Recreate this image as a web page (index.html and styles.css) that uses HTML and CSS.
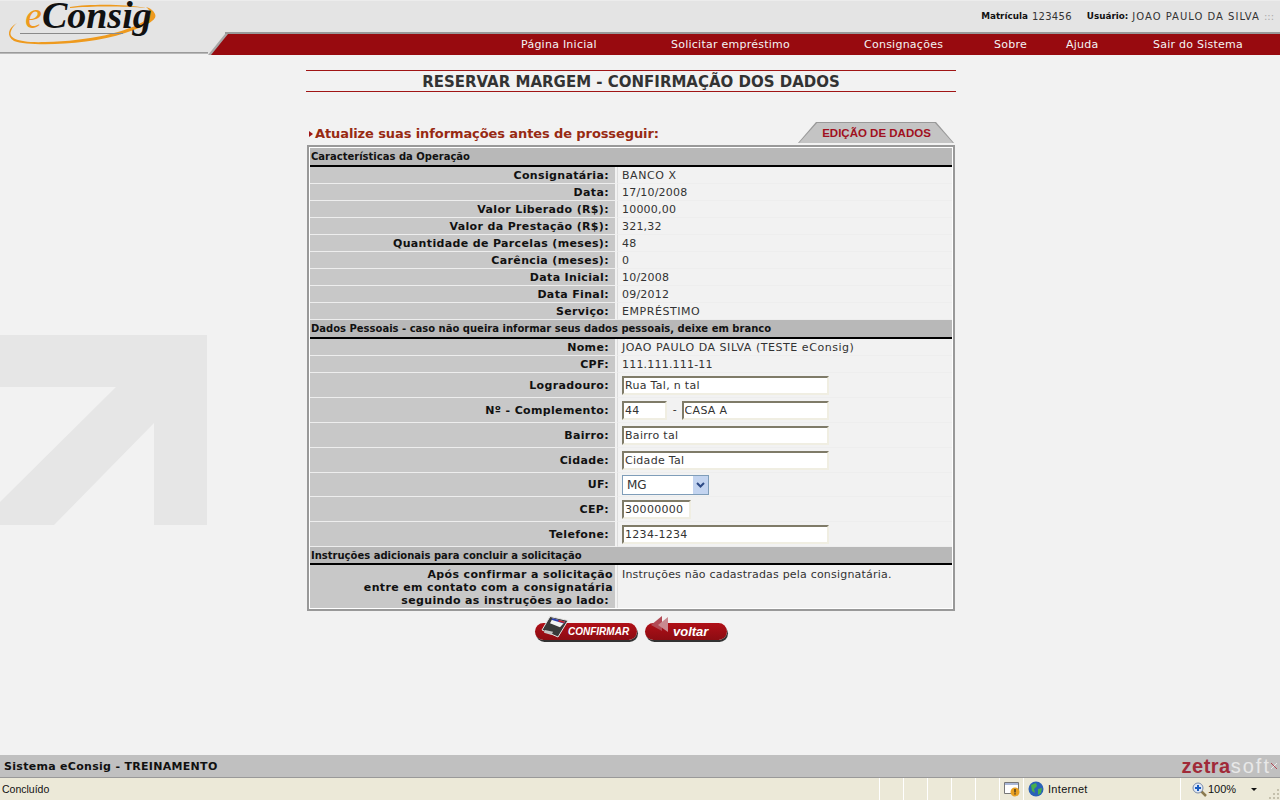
FILE: index.html
```html
<!DOCTYPE html>
<html lang="pt-BR">
<head>
    <meta charset="UTF-8">
    <title>eConsig - Reservar Margem</title>
    <link rel="stylesheet" href="styles.css">
</head>
<body>
    <svg class="watermark" width="207" height="190" viewBox="0 0 207 190">
        <path fill="#e6e6e6" d="M0 0H207V190H154V88L54 190H0V167L116 52H0Z"/>
    </svg>

    <header class="top">
        <div class="top-bar">
            <div class="logo">
                <svg class="logo-swoosh" width="165" height="50" viewBox="0 0 165 50">
                    <path fill="#ee9a1e" d="M17 23C8 28 6 36 14 41C30 47 90 45 125 33C146 26 158 20 155 14C154 11 150 8 146 7C151 11 152 15 146 20C128 32 90 41 45 42C18 43 8 38 11 31C12 28 14 25 17 23Z"/>
                    <path fill="#ee9a1e" d="M70 7C90 4 125 4 146 8C125 6 90 6 70 8Z"/>
                    <path fill="#8a8a8a" d="M20 33H123V34H20Z"/>
                </svg>
                <span class="logo-text"><span class="logo-e">e</span>Consig</span>
            </div>
            <div class="user-info">
                <b>Matrícula</b>
                <span class="user-num">123456</span>
                <b class="user-label">Usuário:</b>
                <span class="user-name">JOAO PAULO DA SILVA</span>
                <span class="dots">:::</span>
            </div>
        </div>
        <nav class="menu">
            <a href="#">Página Inicial</a>
            <a href="#">Solicitar empréstimo</a>
            <a href="#">Consignações</a>
            <a href="#">Sobre</a>
            <a href="#">Ajuda</a>
            <a href="#">Sair do Sistema</a>
        </nav>
    </header>

    <main class="content">
        <h1 class="page-title">RESERVAR MARGEM - CONFIRMAÇÃO DOS DADOS</h1>

        <div class="form-head">
            <h2 class="form-title"><span class="bullet"></span>Atualize suas informações antes de prosseguir:</h2>
            <div class="tab"><span>EDIÇÃO DE DADOS</span></div>
        </div>

        <table class="data-table">
            <colgroup><col class="col-label"><col></colgroup>
            <tr class="section section-tall"><th colspan="2">Características da Operação</th></tr>
            <tr><th>Consignatária:</th><td class="upper">BANCO X</td></tr>
            <tr><th>Data:</th><td>17/10/2008</td></tr>
            <tr><th>Valor Liberado (R$):</th><td>10000,00</td></tr>
            <tr><th>Valor da Prestação (R$):</th><td>321,32</td></tr>
            <tr><th>Quantidade de Parcelas (meses):</th><td>48</td></tr>
            <tr><th>Carência (meses):</th><td>0</td></tr>
            <tr><th>Data Inicial:</th><td>10/2008</td></tr>
            <tr><th>Data Final:</th><td>09/2012</td></tr>
            <tr><th>Serviço:</th><td class="upper">EMPRÉSTIMO</td></tr>
            <tr class="section section-tall"><th colspan="2">Dados Pessoais - caso não queira informar seus dados pessoais, deixe em branco</th></tr>
            <tr><th>Nome:</th><td class="upper">JOAO PAULO DA SILVA (TESTE eConsig)</td></tr>
            <tr><th>CPF:</th><td>111.111.111-11</td></tr>
            <tr class="field"><th>Logradouro:</th><td><input class="input-long" value="Rua Tal, n tal"></td></tr>
            <tr class="field"><th>Nº - Complemento:</th><td><input class="input-num" value="44"> <span class="dash">-</span> <input class="input-comp" value="CASA A"></td></tr>
            <tr class="field"><th>Bairro:</th><td><input class="input-long" value="Bairro tal"></td></tr>
            <tr class="field"><th>Cidade:</th><td><input class="input-long" value="Cidade Tal"></td></tr>
            <tr class="field field-short"><th>UF:</th><td>
                <span class="select-wrap">
                    <select class="select-uf"><option>MG</option></select>
                    <span class="select-arrow">
                        <svg width="9" height="6" viewBox="0 0 9 6"><path fill="none" stroke="#2d4a86" stroke-width="2" d="M1 1L4.500 4.500L8 1"/></svg>
                    </span>
                </span>
            </td></tr>
            <tr class="field"><th>CEP:</th><td><input class="input-cep" value="30000000"></td></tr>
            <tr class="field"><th>Telefone:</th><td><input class="input-long" value="1234-1234"></td></tr>
            <tr class="section"><th colspan="2">Instruções adicionais para concluir a solicitação</th></tr>
            <tr class="notes">
                <th>Após confirmar a solicitação<br>entre em contato com a consignatária<br><span class="notes-end">seguindo as instruções ao lado:</span></th>
                <td>Instruções não cadastradas pela consignatária.</td>
            </tr>
        </table>

        <div class="actions">
            <a class="btn btn-confirm" href="#">
                <svg class="btn-icon" width="30" height="24" viewBox="0 0 30 24">
                    <path fill="#3a3a3a" stroke="#e4e4e4" d="M9 .5L27 4.500L17 21L1 14Z"/>
                    <path fill="#f4f4f4" d="M11.700 2.300L24 5.700L19 11.300L9 7.300Z"/>
                    <path fill="#2b3fb0" d="M11.700 2.300L24 5.700L22.500 7.500L10.300 3.800Z"/>
                    <path fill="#c22" d="M18 4L24 5.700L23 7L17 5.500Z"/>
                    <path fill="#c4c4c4" d="M4 14L12 15.700L10.700 19L3 16.700Z"/>
                </svg>
                <span class="btn-text">CONFIRMAR</span>
            </a>
            <a class="btn btn-back" href="#">
                <svg class="btn-icon" width="18" height="17" viewBox="0 0 18 17">
                    <path fill="#b24a55" d="M0 9L11 0V15Z"/>
                    <path fill="#c98a90" d="M7 9L17 1V16Z"/>
                </svg>
                <span class="btn-text btn-text-low">voltar</span>
            </a>
        </div>
    </main>

    <footer class="footer">
        <span class="footer-title">Sistema eConsig - TREINAMENTO</span>
        <span class="zetra"><span class="zetra-red">zetra</span>soft<svg class="zetra-mark" width="6" height="8" viewBox="0 0 6 8"><path stroke="#b04a56" d="M0 1L6 7"/><path stroke="#eee" d="M6 1L0 7"/></svg></span>
    </footer>

    <div class="statusbar">
        <span class="status-text">Concluído</span>
        <span class="status-cell status-blank"></span>
        <span class="status-cell status-blank"></span>
        <span class="status-cell status-blank"></span>
        <span class="status-cell status-blank"></span>
        <span class="status-cell status-blank"></span>
        <span class="status-cell status-page">
            <svg width="16" height="16" viewBox="0 0 16 16">
                <path fill="#fff" stroke="#777" d="M.5 1.500H14.500V12.500H.5Z"/>
                <path fill="#aab8d8" d="M1 2H14V4H1Z"/>
                <circle cx="11" cy="11" r="4.500" fill="#e8a020"/>
                <path fill="#222" d="M10.400 8H11.600V11.500H10.400ZM10.400 12.300H11.600V13.500H10.400Z"/>
            </svg>
        </span>
        <span class="status-cell status-zone">
            <svg width="16" height="16" viewBox="0 0 16 16">
                <circle cx="8" cy="8" r="7.500" fill="#2a62b8"/>
                <path fill="#48b04a" d="M3 4L8 2L9 5L6 8L7 12L4 10ZM10 8L14 7L13 12L10 14Z"/>
            </svg>
            Internet
        </span>
        <span class="status-cell status-zoom">
            <svg width="15" height="15" viewBox="0 0 15 15">
                <path stroke="#8a7a50" stroke-width="2.500" d="M9 9L14 14"/>
                <circle cx="6" cy="6" r="5" fill="#dfe8f6" stroke="#7c8ca8"/>
                <path stroke="#1a5cc0" stroke-width="2" d="M3 6H9M6 3V9"/>
            </svg>
            100%
            <span class="zoom-arrow"></span>
            <svg class="grip" width="12" height="12" viewBox="0 0 12 12">
                <path fill="#c4c0ac" d="M9 1h2v2H9ZM5 5h2v2H5ZM9 5h2v2H9ZM1 9h2v2H1ZM5 9h2v2H5ZM9 9h2v2H9Z"/>
            </svg>
        </span>
    </div>
</body>
</html>
```

FILE: styles.css
```css
* {
    margin: 0;
    padding: 0;
    box-sizing: border-box;
}

html, body {
    height: 100%;
    overflow: hidden;
}

body {
    position: relative;
    display: flex;
    flex-direction: column;
    font-family: "DejaVu Sans", Verdana, sans-serif;
    font-size: 11px;
    color: #222;
    background: #f2f2f2;
}

.watermark {
    position: absolute;
    left: 0;
    top: 335px;
}

/* header */
.top {
    position: relative;
    height: 55px;
    flex: none;
    background: linear-gradient(#e4e4e4 53px, #f2f2f2 53px);
    border-top: 1px solid #ececec;
}

.top::after {
    content: "";
    position: absolute;
    left: 0;
    right: 1072px;
    bottom: 1px;
    height: 2px;
    background: linear-gradient(#8c8c8c, #c8c8c8);
}

.top-bar {
    display: flex;
    height: 33px;
    border-bottom: 2px solid #999;
    margin-left: 225px;
}

.logo {
    position: absolute;
    left: 0;
    top: -1px;
    width: 165px;
    height: 50px;
}

.logo-swoosh {
    position: absolute;
    left: 0;
    top: 0;
}

.logo-text {
    position: absolute;
    left: 25px;
    top: 1px;
    font-family: "Liberation Serif", serif;
    font-style: italic;
    font-weight: bold;
    font-size: 38px;
    line-height: 28px;
    white-space: nowrap;
    color: #111;
}

.logo-e {
    color: #ee9a1e;
    font-weight: normal;
}

.user-info {
    display: flex;
    align-items: center;
    gap: 4px;
    height: 12px;
    margin: 9px 6px 0 auto;
    font-size: 10px;
    color: #333;
}

.user-info b {
    font-size: 8.800px;
    color: #111;
}

.user-num {
    letter-spacing: .3px;
}

.user-info .user-label {
    margin-left: 11px;
}

.user-name {
    letter-spacing: 1px;
}

.dots {
    color: #aaa;
}

.menu {
    position: relative;
    display: grid;
    grid-template-columns: 150px 193px 130px 72px 87px auto;
    align-items: center;
    height: 21px;
    margin-left: 208px;
    padding-left: 313px;
    background: #a8a8a8;
    clip-path: polygon(17px 0, 100% 0, 100% 100%, 0 100%);
}

.menu::before {
    content: "";
    position: absolute;
    inset: 0;
    background: #980a0f;
    clip-path: polygon(20px 0, 100% 0, 100% 100%, 3px 100%);
}

.menu a {
    position: relative;
    color: #f4f4f4;
    text-decoration: none;
    font-size: 11px;
    letter-spacing: .25px;
    white-space: nowrap;
}

/* main block */
.content {
    flex: 1;
    position: relative;
    width: 650px;
    margin-left: 306px;
    padding-top: 15px;
}

.page-title {
    height: 22px;
    border-top: 1px solid #a01515;
    border-bottom: 1px solid #a01515;
    font-size: 15px;
    line-height: 22px;
    text-align: center;
    color: #333;
}

.form-head {
    display: flex;
    justify-content: space-between;
    align-items: flex-end;
    height: 53px;
    padding: 0 2px 0 3px;
}

.form-title {
    display: flex;
    align-items: center;
    font-size: 13px;
    line-height: 16px;
    letter-spacing: -.1px;
    padding-bottom: 3px;
    color: #982a12;
}

.bullet {
    width: 0;
    height: 0;
    margin-right: 2px;
    border-left: 4px solid #a01515;
    border-top: 3px solid transparent;
    border-bottom: 3px solid transparent;
}

.tab {
    width: 156px;
    height: 21px;
    background: #999;
    clip-path: polygon(18px 0, 138px 0, 100% 100%, 0 100%);
    padding: 1px 0 0 1px;
    margin-bottom: 2px;
}

.tab span {
    display: block;
    height: 20px;
    background: #c4c4c4;
    clip-path: polygon(18px 0, 136px 0, 154px 100%, 0 100%);
    text-align: center;
    font-family: "Liberation Sans", sans-serif;
    font-weight: bold;
    font-size: 11.500px;
    line-height: 21px;
    color: #a01020;
}

/* data table */
.data-table {
    width: 648px;
    margin-left: 1px;
    border: 2px solid #999;
    border-spacing: 0;
    table-layout: fixed;
    background: #f2f2f2;
    box-shadow: inset 0 0 0 1px #fff;
    padding: 1px;
}

.col-label {
    width: 307px;
}

.data-table tr {
    height: 17px;
}

.data-table th {
    padding-right: 6px;
    text-align: right;
    font-weight: bold;
    letter-spacing: .35px;
    color: #111;
    background: #c8c8c8;
    border-bottom: 1px solid #eee;
    border-right: 2px solid #f2f2f2;
    line-height: 13px;
}

.data-table td {
    padding-left: 4px;
    letter-spacing: .2px;
    color: #333;
    border-bottom: 1px solid #eee;
    border-left: 1px solid #ddd;
    line-height: 13px;
}

.data-table td.upper {
    letter-spacing: .55px;
}

.data-table .section {
    height: 18px;
}

.data-table .section-tall {
    height: 19px;
}

.data-table .section th {
    padding: 0 0 0 1px;
    text-align: left;
    font-size: 10px;
    letter-spacing: 0;
    background: #b8b8b8;
    border-right: 0;
    border-bottom: 2px solid #000;
}

.data-table .field {
    height: 25px;
}

.data-table .field-short {
    height: 24px;
}

.data-table .notes {
    height: 43px;
}

.notes th {
    vertical-align: top;
    padding: 3px 2px 0 0;
    border-bottom: 0;
}

.notes-end {
    padding-right: 4px;
}

.notes td {
    vertical-align: top;
    padding-top: 3px;
    border-bottom: 0;
}

/* form controls */
input {
    height: 19px;
    padding: 0 1px;
    font-family: inherit;
    font-size: 11px;
    letter-spacing: .3px;
    color: #333;
    background: #fff;
    border: 2px solid;
    border-color: #7f7b68 #f0eee2 #f0eee2 #7f7b68;
    vertical-align: middle;
}

.input-long {
    width: 207px;
}

.input-num {
    width: 45px;
}

.input-comp {
    width: 147px;
}

.input-cep {
    width: 69px;
}

.dash {
    margin: 0 1px 0 2px;
}

.select-wrap {
    position: relative;
    display: inline-block;
    vertical-align: middle;
}

.select-uf {
    display: block;
    width: 87px;
    height: 20px;
    padding-left: 4px;
    appearance: none;
    font-family: inherit;
    font-size: 12px;
    color: #333;
    background: #fff;
    border: 1px solid #7f9db9;
    border-radius: 0;
}

.select-arrow {
    position: absolute;
    right: 1px;
    top: 1px;
    bottom: 1px;
    width: 15px;
    display: flex;
    align-items: center;
    justify-content: center;
    background: #c3d4f0;
}

/* buttons */
.actions {
    display: flex;
    justify-content: center;
    gap: 8px;
    padding-top: 12px;
}

.btn {
    position: relative;
    display: block;
    height: 17px;
    border-radius: 9px;
    background: linear-gradient(#b01018, #8c0c12);
    box-shadow: 1px 2px 0 #333;
    text-decoration: none;
    font-family: "Liberation Sans", sans-serif;
    font-style: italic;
    font-weight: bold;
    color: #fff;
}

.btn-confirm {
    width: 102px;
}

.btn-back {
    width: 82px;
}

.btn-icon {
    position: absolute;
    top: -7px;
    left: 6px;
}

.btn-text {
    position: absolute;
    left: 33px;
    top: 2px;
    font-size: 10px;
    line-height: 14px;
}

.btn-text-low {
    left: 28px;
    top: 2px;
    font-size: 13px;
}

/* footer */
.footer {
    flex: none;
    display: flex;
    justify-content: space-between;
    align-items: center;
    height: 23px;
    padding: 1px 9px 0 4px;
    background: #c0c0c0;
    border-bottom: 1px solid #999;
}

.footer-title {
    font-weight: bold;
    font-size: 11px;
    letter-spacing: .3px;
    color: #111;
}

.zetra {
    position: relative;
    font-family: "Liberation Sans", sans-serif;
    font-size: 20px;
    letter-spacing: 2px;
    color: #e8e8e8;
}

.zetra-red {
    font-weight: bold;
    letter-spacing: .5px;
    color: #a02a38;
}

.zetra-mark {
    position: absolute;
    right: -6px;
    top: 7px;
}

.statusbar {
    flex: none;
    display: flex;
    align-items: center;
    height: 22px;
    background: #ece9d8;
    font-family: "Liberation Sans", sans-serif;
    font-size: 11px;
    color: #111;
}

.status-text {
    flex: 1;
    padding-left: 2px;
    font-size: 10.500px;
}

.status-cell {
    display: flex;
    align-items: center;
    height: 100%;
    border-left: 1px solid #fff;
}

.status-blank {
    width: 24px;
}

.status-page {
    width: 24px;
    padding-left: 4px;
}

.status-zone {
    width: 157px;
    gap: 4px;
    padding-left: 4px;
    letter-spacing: .3px;
}

.status-zoom {
    position: relative;
    width: 100px;
    gap: 1px;
    padding-left: 11px;
}

.zoom-arrow {
    position: absolute;
    left: 70px;
    top: 10px;
    border-top: 3px solid #111;
    border-left: 3px solid transparent;
    border-right: 3px solid transparent;
}

.grip {
    position: absolute;
    right: 0;
    bottom: 0;
}
```
